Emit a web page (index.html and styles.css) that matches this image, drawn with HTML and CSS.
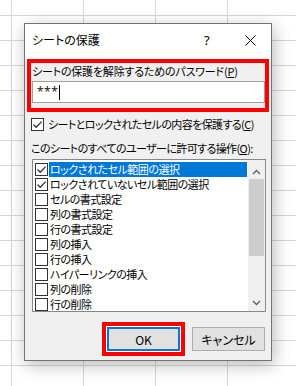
FILE: index.html
```html
<!DOCTYPE html>
<html lang="ja">
<head>
<meta charset="utf-8">
<link rel="stylesheet" href="styles.css">
</head>
<body>
<div class="sheet">
  <div class="dialog">
    <div class="titlebar">
      <span class="title">シートの保護</span>
      <span class="help">?</span>
      <svg class="close" width="11" height="11" viewBox="0 0 11 11"><path d="M0.5 0.5 L10.5 10.5 M10.5 0.5 L0.5 10.5" stroke="#000" stroke-width="1" fill="none"/></svg>
    </div>
    <div class="content">
      <div class="pw-group">
        <div class="pw-label">シートの保護を解除するためのパスワード(<u>P</u>)</div>
        <div class="pw-input"><span class="stars">***</span><span class="caret"></span></div>
      </div>
      <div class="check-row">
        <span class="cb"><svg width="11" height="11" viewBox="0 0 11 11"><path d="M1.5 5.5 L4.2 8.2 L9.6 2.6" stroke="#333" stroke-width="1.3" fill="none"/></svg></span>
        <span class="check-text">シートとロックされたセルの内容を保護する(<u>C</u>)</span>
      </div>
      <div class="ops-label">このシートのすべてのユーザーに許可する操作(<u>O</u>):</div>
      <div class="listbox">
        <div class="items">
          <div class="item selected"><span class="cb"><svg width="11" height="11" viewBox="0 0 11 11"><path d="M1.5 5.5 L4.2 8.2 L9.6 2.6" stroke="#333" stroke-width="1.3" fill="none"/></svg></span><span class="text">ロックされたセル範囲の選択</span></div>
          <div class="item"><span class="cb"><svg width="11" height="11" viewBox="0 0 11 11"><path d="M1.5 5.5 L4.2 8.2 L9.6 2.6" stroke="#333" stroke-width="1.3" fill="none"/></svg></span><span class="text">ロックされていないセル範囲の選択</span></div>
          <div class="item"><span class="cb"></span><span class="text">セルの書式設定</span></div>
          <div class="item"><span class="cb"></span><span class="text">列の書式設定</span></div>
          <div class="item"><span class="cb"></span><span class="text">行の書式設定</span></div>
          <div class="item"><span class="cb"></span><span class="text">列の挿入</span></div>
          <div class="item"><span class="cb"></span><span class="text">行の挿入</span></div>
          <div class="item"><span class="cb"></span><span class="text">ハイパーリンクの挿入</span></div>
          <div class="item"><span class="cb"></span><span class="text">列の削除</span></div>
          <div class="item"><span class="cb"></span><span class="text">行の削除</span></div>
        </div>
        <div class="scrollbar">
          <div class="arrow up"><svg width="9" height="6" viewBox="0 0 9 6"><path d="M1 5 L4.5 1.5 L8 5" stroke="#606060" stroke-width="1.4" fill="none"/></svg></div>
          <div class="track"><div class="thumb"></div></div>
          <div class="arrow down"><svg width="9" height="6" viewBox="0 0 9 6"><path d="M1 1 L4.5 4.5 L8 1" stroke="#606060" stroke-width="1.4" fill="none"/></svg></div>
        </div>
      </div>
      <div class="buttons">
        <button class="btn ok">OK</button>
        <button class="btn">キャンセル</button>
      </div>
    </div>
  </div>
</div>
</body>
</html>
```
FILE: styles.css
```css
html, body {
  margin: 0;
  padding: 0;
}
body {
  font-family: "Noto Sans CJK JP", "Noto Sans", sans-serif;
  font-feature-settings: "palt";
  font-size: 11px;
  color: #000;
  white-space: nowrap;
}
.sheet {
  width: 296px;
  height: 386px;
  box-sizing: border-box;
  padding: 23px 0 0 24px;
  overflow: hidden;
  background-color: #fff;
  background-image:
    linear-gradient(to right, #d6d6d6 1px, transparent 1px),
    linear-gradient(to bottom, #d6d6d6 1px, transparent 1px);
  background-size: 72px 25px;
  background-position: 11px 15px;
}
.dialog {
  width: 248px;
  height: 338px;
  box-sizing: border-box;
  border: 1px solid #737373;
  background: #f0f0f0;
  box-shadow: 2px 4px 16px rgba(0, 0, 0, 0.28);
  display: flex;
  flex-direction: column;
}
.titlebar {
  height: 35px;
  box-sizing: border-box;
  padding: 8px 0 0 7px;
  display: flex;
  align-items: flex-start;
  line-height: 16px;
  background: #fff;
  font-size: 12px;
}
.title {
  flex: 1;
}
.help {
  width: 10px;
  margin-right: 31px;
  font-family: "Noto Sans", sans-serif;
  font-size: 13px;
}
.close {
  margin: 3px 0 0 0;
  margin-right: 15px;
}
.content {
  display: flex;
  flex-direction: column;
}
.pw-group {
  margin: 0 2px;
  border: 4px solid #ff0000;
  height: 53px;
  box-sizing: border-box;
  display: flex;
  flex-direction: column;
}
.pw-label {
  line-height: 16px;
  padding-left: 1px;
  letter-spacing: -0.2px;
}
.pw-input {
  margin: 2px 0 0 1px;
  height: 22px;
  box-sizing: border-box;
  border: 1px solid #a0a0a0;
  background: #fff;
  display: flex;
  align-items: flex-start;
  padding: 2px 0 0 4px;
}
.stars {
  line-height: 16px;
  font-family: "Noto Sans", sans-serif;
  font-size: 12px;
  letter-spacing: 0.5px;
  color: #222;
}
.caret {
  width: 1px;
  height: 15px;
  background: #000;
  margin-left: 1px;
  margin-top: 1px;
}
.check-row {
  margin: 4px 0 0 6px;
  height: 16px;
  display: flex;
  align-items: center;
  gap: 4px;
  line-height: 16px;
}
.check-text {
  letter-spacing: -0.6px;
}
.cb {
  width: 13px;
  height: 13px;
  box-sizing: border-box;
  border: 1px solid #333;
  background: #fff;
  flex: none;
  display: flex;
  align-items: center;
  justify-content: center;
}
.ops-label {
  margin: 8px 0 0 6px;
  line-height: 16px;
  letter-spacing: -0.6px;
}
.listbox {
  margin: 3px 0 0 7px;
  width: 234px;
  height: 153px;
  box-sizing: border-box;
  border: 1px solid #828790;
  background: #fff;
  display: flex;
}
.items {
  flex: 1;
  padding-top: 2px;
  overflow: hidden;
}
.item {
  height: 15px;
  display: flex;
  align-items: center;
  padding-left: 2px;
}
.item .text {
  flex: 1;
  margin: 0 1px 0 1px;
  padding-left: 1px;
  height: 15px;
  line-height: 15px;
  white-space: nowrap;
  letter-spacing: -0.5px;
}
.item.selected .text {
  background: #0078d7;
  color: #fff;
}
.scrollbar {
  width: 17px;
  background: #f0f0f0;
  display: flex;
  flex-direction: column;
}
.arrow {
  height: 18px;
  display: flex;
  justify-content: center;
}
.arrow.up {
  align-items: flex-end;
  padding-bottom: 3px;
  box-sizing: border-box;
}
.arrow.down {
  align-items: center;
  height: 17px;
}
.track {
  flex: 1;
  padding-top: 1px;
}
.thumb {
  width: 15px;
  margin-left: 1px;
  height: 77px;
  background: #cdcdcd;
}
.buttons {
  margin-top: 15px;
  display: flex;
  justify-content: flex-end;
  gap: 12px;
  padding-right: 6px;
}
.btn {
  width: 73px;
  height: 24px;
  box-sizing: border-box;
  border: 1px solid #adadad;
  background: #e1e1e1;
  font-family: "Noto Sans CJK JP", "Noto Sans", sans-serif;
  font-feature-settings: "palt";
  font-size: 12px;
  color: #000;
  padding: 0;
  margin: 0;
}
.btn.ok {
  border: 2px solid #0078d7;
  box-shadow: 0 0 0 1px #fff;
  outline: 4px solid #ff0000;
  outline-offset: 1px;
}
```
